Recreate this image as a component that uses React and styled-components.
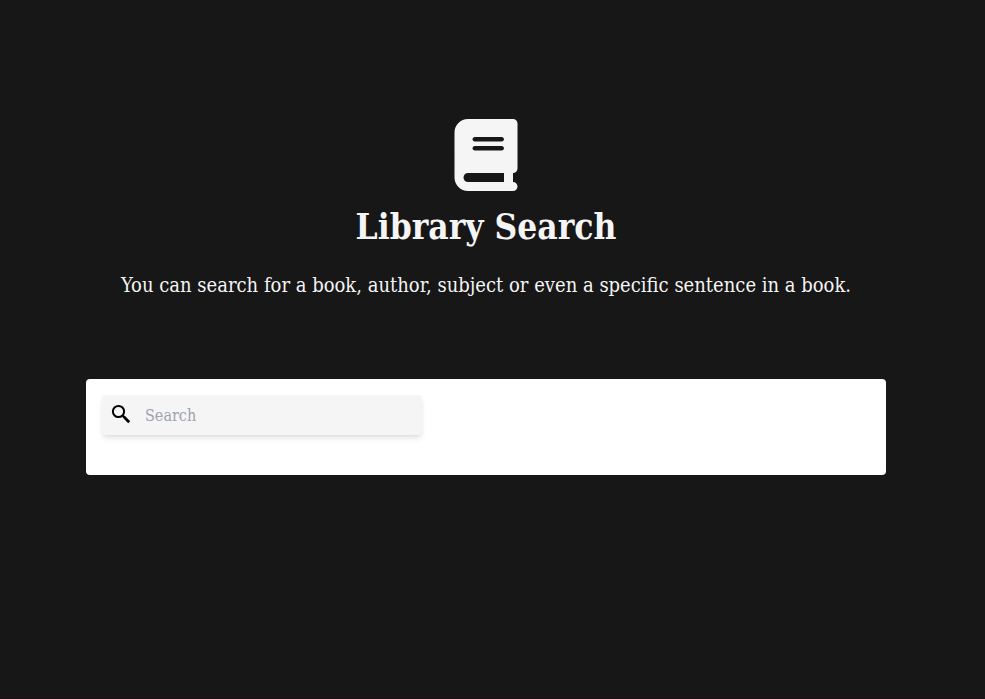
import React from 'react';
import styled, { createGlobalStyle } from 'styled-components';

const GlobalStyle = createGlobalStyle`
  * { box-sizing: border-box; }
  body {
    margin: 0;
    background: #171717;
    color: #f5f5f5;
    font-family: "Roboto Slab", "DejaVu Serif Condensed", "DejaVu Serif", serif;
  }
`;

const Page = styled.main`
  display: flex;
  flex-direction: column;
  align-items: center;
  min-height: 100vh;
  padding: 119px 13px 40px 0;
  border-bottom: 1px solid #181014;
`;

const Hero = styled.header`
  display: flex;
  flex-direction: column;
  align-items: center;
  text-align: center;
`;

const BookIcon = styled.svg`
  display: block;
  width: 64px;
  height: 72px;
  fill: currentColor;
`;

const Title = styled.h1`
  margin: 16px 0 0;
  font-size: 35px;
  line-height: 40px;
  font-weight: 700;
`;

const Intro = styled.p`
  margin: 24px 0 0;
  font-size: 20px;
  line-height: 28px;
`;

const Panel = styled.section`
  width: calc(100% - 32px);
  max-width: 800px;
  margin-top: 80px;
  padding: 16px 16px 40px;
  border-radius: 4px;
  background: #ffffff;
`;

const SearchField = styled.label`
  display: flex;
  align-items: center;
  width: 100%;
  max-width: 320px;
  height: 40px;
  padding: 0 8px 0 7px;
  border-radius: 4px;
  background: #f5f5f5;
  color: #000000;
  box-shadow: 0 4px 6px -1px rgba(0, 0, 0, 0.1), 0 2px 4px -1px rgba(0, 0, 0, 0.06);
`;

const SearchIcon = styled.svg`
  flex: none;
  width: 24px;
  height: 24px;
  margin-bottom: 2px;
  fill: none;
  stroke: currentColor;
`;

const SearchInput = styled.input`
  flex: 1;
  min-width: 0;
  height: 40px;
  margin-left: 12px;
  padding: 0;
  border: 0;
  outline: 0;
  background: transparent;
  color: #171717;
  font-family: inherit;
  font-size: 16px;
  line-height: 24px;

  &::placeholder {
    color: #9ca3af;
    opacity: 1;
  }
`;

export default function App() {
  return (
    <>
      <GlobalStyle />
      <Page>
        <Hero>
          <BookIcon viewBox="0 0 448 512" aria-hidden="true">
            <path d="M96 0C43 0 0 43 0 96V416c0 53 43 96 96 96H384h32c17.7 0 32-14.3 32-32s-14.3-32-32-32V384c17.7 0 32-14.3 32-32V32c0-17.7-14.3-32-32-32H384 96zm0 384H352v64H96c-17.7 0-32-14.3-32-32s14.3-32 32-32zm32-240c0-8.8 7.2-16 16-16H336c8.8 0 16 7.2 16 16s-7.2 16-16 16H144c-8.8 0-16-7.2-16-16zm16 48H336c8.8 0 16 7.2 16 16s-7.2 16-16 16H144c-8.8 0-16-7.2-16-16s7.2-16 16-16z" />
          </BookIcon>
          <Title>Library Search</Title>
          <Intro>You can search for a book, author, subject or even a specific sentence in a book.</Intro>
        </Hero>
        <Panel>
          <SearchField>
            <SearchIcon viewBox="0 0 24 24" aria-hidden="true">
              <circle cx="9.5" cy="9.5" r="5.6" strokeWidth="2" />
              <path d="M13.4 13.4l1.8 1.8" strokeWidth="2" />
              <path d="M14.6 14.6l5.6 5.6" strokeWidth="2.8" />
            </SearchIcon>
            <SearchInput type="search" placeholder="Search" aria-label="Search" />
          </SearchField>
        </Panel>
      </Page>
    </>
  );
}
